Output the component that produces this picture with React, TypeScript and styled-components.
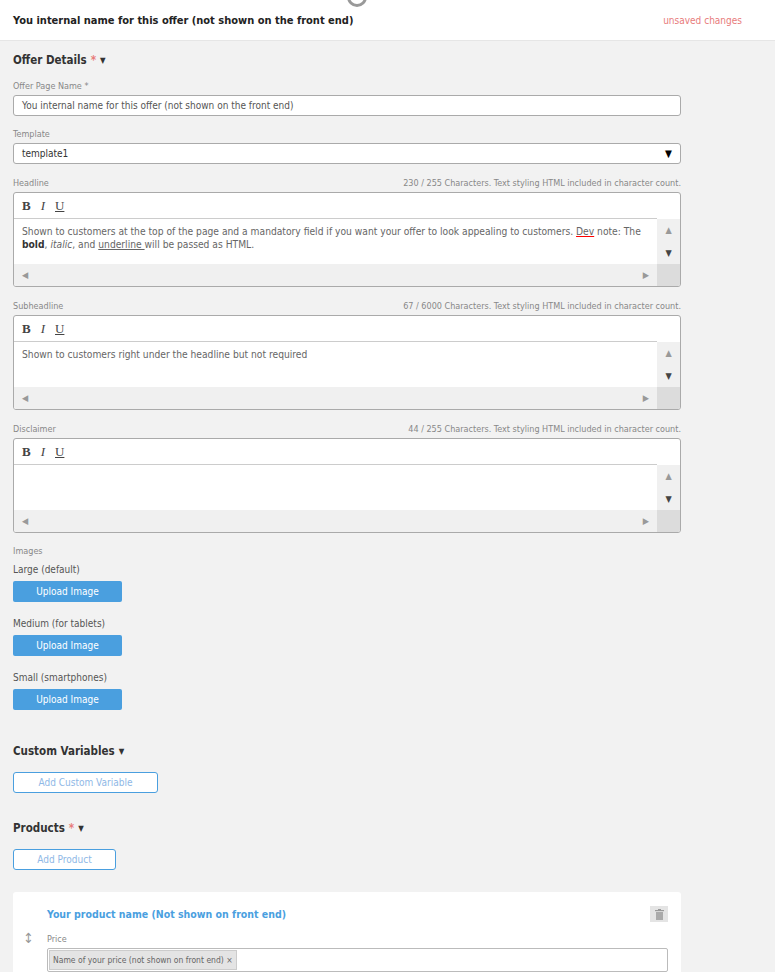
import React from "react";
import styled, { createGlobalStyle } from "styled-components";

const G = createGlobalStyle`
  body { margin:0; background:#f2f2f2; font-family:"DejaVu Sans Condensed","Liberation Sans",sans-serif; color:#333; }
`;
const Header = styled.div`
  height:40px; background:#fff; display:flex; align-items:center; padding:0 13px; position:relative;
  border-bottom:1px solid #e6e6e6;
`;
const HTitle = styled.div`font-weight:bold; font-size:11px; flex:1; color:#222;`;
const Unsaved = styled.div`color:#e87b7b; font-size:10px; margin-right:20px;`;
const Spinner = styled.div`position:absolute; left:347px; top:-8px; width:14px; height:12px; border:3px solid #999; border-top:none; border-radius:0 0 10px 10px;`;
const Main = styled.div`padding:12px 13px 20px; width:668px;`;
const Section = styled.div<{ $mt?: number }>`font-weight:bold; font-size:11.5px; color:#333; display:flex; align-items:center; gap:4px; margin:${p=>p.$mt||0}px 0 0;`;
const Star = styled.span`color:#e87b7b;`;
const Tri = styled.span`font-size:8px;`;
const Label = styled.div<{ $mt?: number }>`font-size:9px; color:#888; display:flex; justify-content:space-between; margin:${p=>p.$mt||0}px 0 4px;`;
const Input = styled.div`height:19px; background:#fff; border:1px solid #aaa; border-radius:3px; font-size:10px; color:#555; display:flex; align-items:center; justify-content:space-between; padding:0 8px;`;
const Editor = styled.div`border:1px solid #aaa; border-radius:3px; background:#fff; overflow:hidden;`;
const Toolbar = styled.div`height:25px; display:flex; gap:10px; align-items:center; padding:0 8px; font-family:"Liberation Serif",serif; font-size:13px; color:#444; border-bottom:1px solid #ccc; margin-right:23px;`;
const Body = styled.div`display:grid; grid-template-columns:1fr 23px; grid-template-rows:45px 22px;`;
const Text = styled.div`font-size:10.2px; color:#666; padding:6px 8px; line-height:13px;`;
const VBar = styled.div`background:#f0f0f0; display:flex; flex-direction:column; align-items:center; justify-content:space-around; font-size:9px; color:#999;`;
const HBar = styled.div`background:#f0f0f0; display:flex; justify-content:space-between; align-items:center; padding:0 8px 0 8px; font-size:9px; color:#999;`;
const Corner = styled.div`background:#dcdcdc;`;
const Sub = styled.div<{ $mt?: number }>`font-size:10px; color:#555; margin:${p=>p.$mt||0}px 0 6px;`;
const Btn = styled.div`width:109px; height:21px; background:#4a9fdf; color:#fff; font-size:10px; display:flex; align-items:center; justify-content:center; border-radius:2px;`;
const OBtn = styled.div<{ $w: number }>`display:inline-flex; width:${p=>p.$w}px; height:19px; border:1px solid #4a9fdf; border-radius:3px; background:#fff; color:#8fb8e6; font-size:10px; align-items:center; justify-content:center; margin-top:14px;`;
const Card = styled.div`margin-top:22px; background:#fff; border-radius:3px; padding:14px 13px 20px 34px; position:relative;`;
const PName = styled.div`color:#4a9fdf; font-weight:bold; font-size:10.5px; display:flex; justify-content:space-between; align-items:center;`;
const Trash = styled.div`width:18px; height:16px; background:#e4e4e4; display:flex; align-items:center; justify-content:center;`;
const Drag = styled.div`position:absolute; left:10px; top:38px; font-size:14px; color:#999;`;
const Tags = styled.div`height:20px; border:1px solid #bbb; border-radius:2px; padding:1px; display:flex;`;
const Tag = styled.div`background:#e4e4e4; border:1px solid #ccc; font-size:8.5px; color:#666; padding:0 3px; display:flex; align-items:center;`;

const Ed = ({ children }: { children?: React.ReactNode }) => (
  <Editor>
    <Toolbar><b>B</b><i>I</i><u>U</u></Toolbar>
    <Body>
      <Text>{children}</Text>
      <VBar><span>▲</span><span style={{color:"#444"}}>▼</span></VBar>
      <HBar><span>◀</span><span>▶</span></HBar>
      <Corner />
    </Body>
  </Editor>
);

export default function App() {
  return (
    <>
      <G />
      <Header><Spinner /><HTitle>You internal name for this offer (not shown on the front end)</HTitle><Unsaved>unsaved changes</Unsaved></Header>
      <Main>
        <Section>Offer Details <Star>*</Star><Tri>▼</Tri></Section>
        <Label $mt={14}>Offer Page Name *</Label>
        <Input>You internal name for this offer (not shown on the front end)</Input>
        <Label $mt={13}>Template</Label>
        <Input style={{ color: "#333" }}>template1<span style={{fontSize:10,color:"#000"}}>▼</span></Input>
        <Label $mt={14}><span>Headline</span><span>230 / 255 Characters. Text styling HTML included in character count.</span></Label>
        <Ed>Shown to customers at the top of the page and a mandatory field if you want your offer  to look appealing to customers. <u style={{textDecorationColor:"red"}}>Dev</u> note: The <b style={{color:"#333"}}>bold</b>, <i>italic</i>, and <u>underline </u>will be passed as HTML.</Ed>
        <Label $mt={14}><span>Subheadline</span><span>67 / 6000 Characters. Text styling HTML included in character count.</span></Label>
        <Ed>Shown to customers right under the headline but not required</Ed>
        <Label $mt={14}><span>Disclaimer</span><span>44 / 255 Characters. Text styling HTML included in character count.</span></Label>
        <Ed />
        <Label $mt={13}>Images</Label>
        <Sub $mt={8}>Large (default)</Sub><Btn>Upload Image</Btn>
        <Sub $mt={16}>Medium (for tablets)</Sub><Btn>Upload Image</Btn>
        <Sub $mt={16}>Small (smartphones)</Sub><Btn>Upload Image</Btn>
        <Section $mt={34}>Custom Variables <Tri>▼</Tri></Section>
        <OBtn $w={143}>Add Custom Variable</OBtn>
        <Section $mt={28}>Products <Star>*</Star><Tri>▼</Tri></Section>
        <OBtn $w={101}>Add Product</OBtn>
        <Card>
          <Drag>↕</Drag>
          <PName>Your product name (Not shown on front end)<Trash>
            <svg width="9" height="11" viewBox="0 0 9 11"><rect x="0" y="1" width="9" height="1.2" fill="#999"/><rect x="3" y="0" width="3" height="1.2" fill="#999"/><rect x="1" y="3" width="7" height="8" fill="#aaa"/></svg>
          </Trash></PName>
          <Label $mt={12}>Price</Label>
          <Tags><Tag>Name of your price (not shown on front end) ×</Tag></Tags>
        </Card>
      </Main>
    </>
  );
}
